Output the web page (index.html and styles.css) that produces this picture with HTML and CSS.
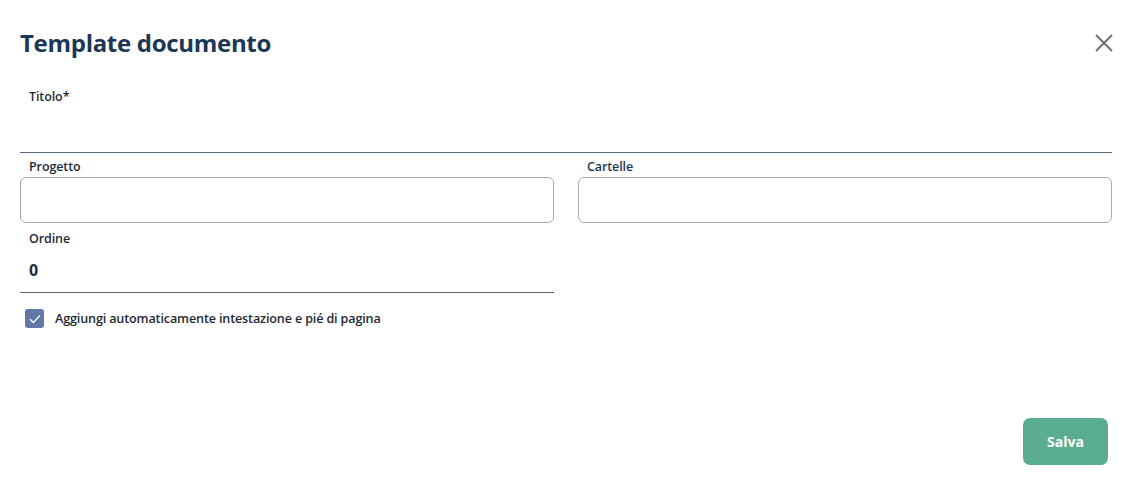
FILE: index.html
```html
<!DOCTYPE html>
<html lang="it">
<head>
    <meta charset="UTF-8">
    <meta name="viewport" content="width=device-width, initial-scale=1.0">
    <title>Template documento</title>
    <link rel="stylesheet" href="styles.css">
</head>
<body>

<div class="dialog">
    <div class="dialog-header">
        <h2>Template documento</h2>
        <button class="close-btn" aria-label="Chiudi">
            <svg width="20" height="20" viewBox="0 0 20 20">
                <path d="M2 2 L18 18 M18 2 L2 18" stroke="#6b6b6b" stroke-width="1.8" fill="none"/>
            </svg>
        </button>
    </div>

    <div class="field line-field">
        <label>Titolo*</label>
        <input type="text" class="line-input title-input">
    </div>

    <div class="row">
        <div class="field">
            <label>Progetto</label>
            <input type="text" class="box-input">
        </div>
        <div class="field">
            <label class="navy">Cartelle</label>
            <input type="text" class="box-input">
        </div>
    </div>

    <div class="row">
        <div class="field line-field">
            <label>Ordine</label>
            <input type="text" class="line-input value" value="0">
        </div>
        <div></div>
    </div>

    <label class="check">
        <span class="check-box">
            <svg width="14" height="14" viewBox="0 0 14 14">
                <path d="M2 7.2 L5.4 10.6 L12 3.4" stroke="#fff" stroke-width="1.4" fill="none"/>
            </svg>
        </span>
        Aggiungi automaticamente intestazione e pié di pagina
    </label>

    <div class="footer">
        <button class="save-btn">Salva</button>
    </div>
</div>

</body>
</html>
```

FILE: styles.css
```css
body {
    font-family: "Open Sans", "Noto Sans", sans-serif;
    background-color: #fff;
    margin: 0;
    padding: 0;
    color: #1f2a36;
}
.dialog {
    padding: 20px 20px 0 20px;
}
.dialog-header {
    display: flex;
    align-items: center;
    justify-content: space-between;
    height: 44px;
}
.dialog-header h2 {
    margin: 0;
    font-size: 24px;
    font-weight: 700;
    color: #1b3656;
    letter-spacing: -0.3px;
}
.close-btn {
    background: none;
    border: none;
    padding: 0;
    margin-right: -2px;
    margin-top: 4px;
    cursor: pointer;
}
.field {
    display: flex;
    flex-direction: column;
}
.field label {
    font-size: 12.5px;
    font-weight: 600;
    padding-left: 9px;
    color: #1f2a36;
    letter-spacing: -0.1px;
}
.field label.navy {
    color: #1b3656;
}
.line-field {
    margin-top: 24px;
}
.line-input {
    border: none;
    border-bottom: 1px solid #5a6a7e;
    height: 45px;
    padding: 0 9px;
    font-family: inherit;
    font-size: 16px;
    font-weight: 700;
    color: #1f2a36;
    outline: none;
}
.title-input {
    height: 47px;
}
.row {
    display: grid;
    grid-template-columns: 1fr 1fr;
    gap: 24px;
}
.row .field {
    margin-top: 5px;
}
.row .line-field {
    margin-top: 7px;
}
.box-input {
    margin-top: 2px;
    height: 46px;
    box-sizing: border-box;
    border: 1px solid #a9a9a9;
    border-radius: 6px;
    outline: none;
}
.check {
    display: flex;
    align-items: center;
    gap: 11px;
    margin-top: 16px;
    margin-left: 5px;
    font-size: 12.6px;
    font-weight: 600;
    color: #1f2a36;
    letter-spacing: -0.15px;
}
.check-box {
    width: 19px;
    height: 19px;
    border-radius: 3px;
    background-color: #6077a7;
    display: flex;
    align-items: center;
    justify-content: center;
}
.footer {
    display: flex;
    justify-content: flex-end;
    margin-top: 90px;
    padding-right: 4px;
}
.save-btn {
    background-color: #5aae8f;
    color: #fff;
    border: none;
    border-radius: 7px;
    width: 85px;
    height: 47px;
    font-family: inherit;
    font-size: 14px;
    font-weight: 700;
    cursor: pointer;
}
```
